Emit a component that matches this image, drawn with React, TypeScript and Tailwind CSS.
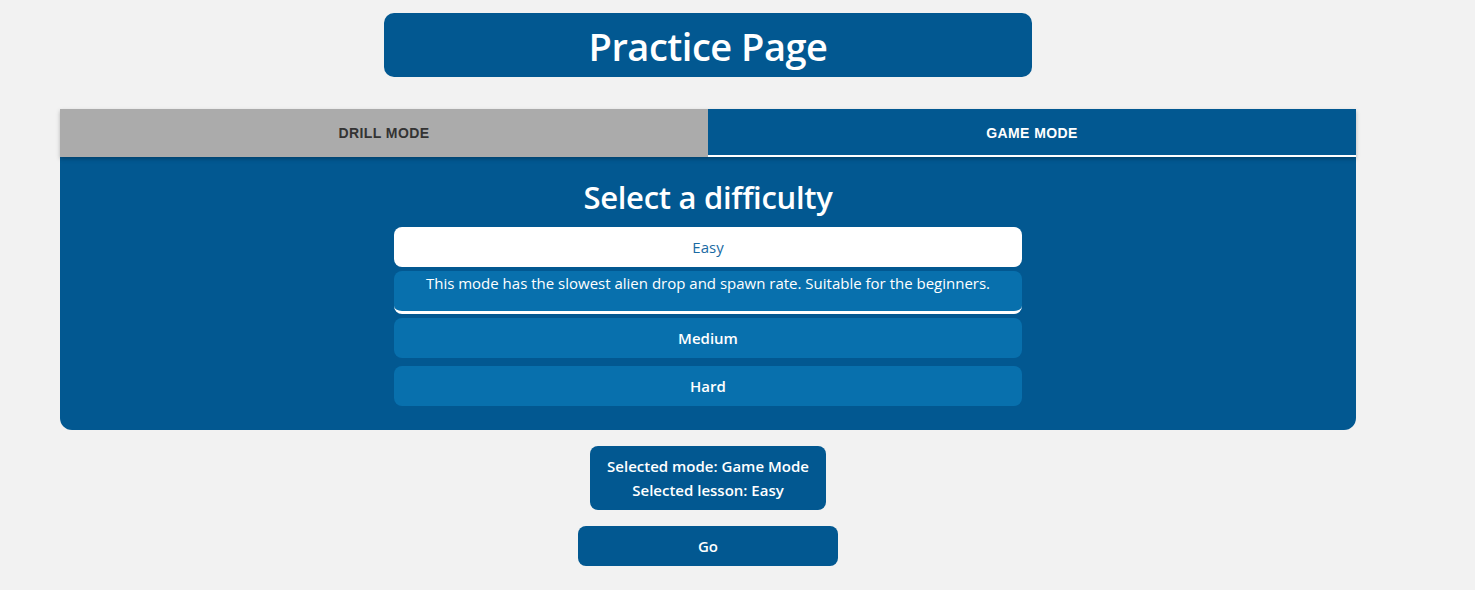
import React from "react";

export default function App() {
  const font = { fontFamily: '"Open Sans", "Noto Sans", sans-serif' };
  const tabFont = { fontFamily: '"Liberation Sans", Arial, sans-serif' };
  return (
    <div className="min-h-[590px] w-full bg-[#f2f2f2]" style={font}>
      <div className="w-[1416px] flex flex-col items-center pt-[13px]">
        <div className="w-[648px] h-[64px] bg-[#025891] rounded-[10px] flex items-center justify-center">
          <h1 className="text-white text-[38px] font-semibold tracking-[-0.5px] leading-[50px] mt-[2px]">Practice Page</h1>
        </div>

        <div className="mt-[32px] w-[1296px] flex flex-col">
          <div className="flex h-[48px] shadow-[0_2px_4px_rgba(0,0,0,0.25)] relative z-10">
            <div className="flex-1 bg-[#ababab] flex items-center justify-center text-[#333] text-[14px] font-bold tracking-[0.4px]" style={tabFont}>
              DRILL MODE
            </div>
            <div className="flex-1 bg-[#025891] flex items-center justify-center text-white text-[14px] font-bold tracking-[0.4px] relative" style={tabFont}>
              GAME MODE
              <div className="absolute left-0 right-0 bottom-0 h-[2px] bg-white" />
            </div>
          </div>
          <div className="bg-[#025891] rounded-b-[12px] flex flex-col items-center pt-[20px] pb-[24px]">
            <h2 className="text-white text-[31px] font-semibold leading-[40px] tracking-[-0.3px]">Select a difficulty</h2>
            <div className="w-[628px] flex flex-col mt-[10px]">
              <button className="h-[40px] bg-white rounded-[8px] text-[#1a6aa3] text-[15px] flex items-center justify-center">Easy</button>
              <div className="mt-[4px] h-[43px] bg-[#0870ad] rounded-[8px] border-b-[3px] border-white text-white text-[15px] text-center pt-[1px] leading-[22px]">
                This mode has the slowest alien drop and spawn rate. Suitable for the beginners.
              </div>
              <button className="mt-[4px] h-[40px] bg-[#0870ad] rounded-[8px] text-white text-[15px] font-semibold flex items-center justify-center">Medium</button>
              <button className="mt-[8px] h-[40px] bg-[#0870ad] rounded-[8px] text-white text-[15px] font-semibold flex items-center justify-center">Hard</button>
            </div>
          </div>
        </div>

        <div className="mt-[16px] w-[236px] h-[64px] bg-[#025891] rounded-[8px] flex flex-col items-center justify-center text-white text-[15px] font-semibold leading-[24px]">
          <div>Selected mode: Game Mode</div>
          <div>Selected lesson: Easy</div>
        </div>

        <button className="mt-[16px] w-[260px] h-[40px] bg-[#025891] rounded-[8px] text-white text-[15px] font-semibold flex items-center justify-center">Go</button>
      </div>
    </div>
  );
}
